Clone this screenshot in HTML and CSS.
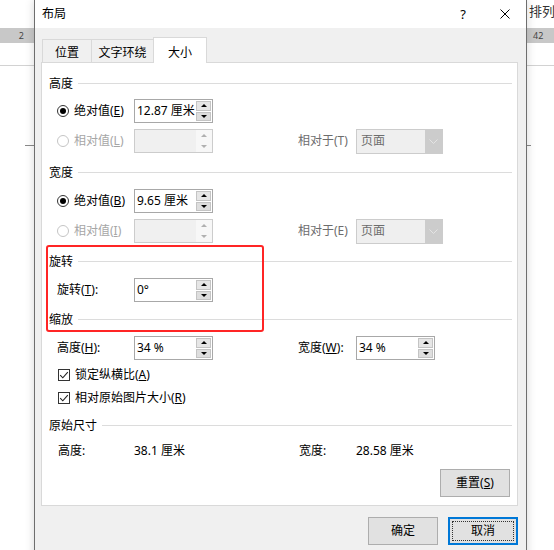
FILE: index.html
```html
<!DOCTYPE html>
<html lang="zh-CN">
<head>
<meta charset="utf-8">
<title>布局</title>
<link rel="stylesheet" href="styles.css">
</head>
<body>
<div class="screen">
  <div class="doc doc-left">
    <div class="doc-top"></div>
    <div class="ruler"><span class="ruler-num">2</span></div>
    <div class="doc-gap"></div>
    <div class="doc-line"></div>
    <div class="tick-row"><span class="tick"></span></div>
  </div>

  <div class="dialog">
    <div class="titlebar">
      <span class="title">布局</span>
      <span class="tb-help">?</span>
      <span class="tb-close"><svg width="10" height="10" viewBox="0 0 10 10"><path d="M0.5 0.5 L9.5 9.5 M9.5 0.5 L0.5 9.5" stroke="#000" stroke-width="1" fill="none"/></svg></span>
    </div>
    <div class="dbody">
      <div class="tabs">
        <div class="tab t1">位置</div>
        <div class="tab t2">文字环绕</div>
        <div class="tab active">大小</div>
      </div>
      <div class="panel">
        <div class="sec">高度</div>
        <div class="row mt7">
          <div class="c1">
            <svg class="radio" width="12" height="12" viewBox="0 0 12 12"><circle cx="6" cy="6" r="5.5" fill="#fff" stroke="#333"/><circle cx="6" cy="6" r="3" fill="#000"/></svg>
            <span class="lbl">绝对值(<u>E</u>)</span>
          </div>
          <div class="spin">
            <span class="spin-val">12.87 厘米</span>
            <span class="spin-btns"><span class="sb"><i class="up"></i></span><span class="sb"><i class="dn"></i></span></span>
          </div>
        </div>
        <div class="row mt6">
          <div class="c1">
            <svg class="radio" width="12" height="12" viewBox="0 0 12 12"><circle cx="6" cy="6" r="5.5" fill="#fff" stroke="#c4c4c4"/></svg>
            <span class="lbl dis">相对值(<u>L</u>)</span>
          </div>
          <div class="spin off">
            <span class="spin-val"></span>
            <span class="spin-btns"><span class="sb"><i class="up"></i></span><span class="sb"><i class="dn"></i></span></span>
          </div>
          <div class="c3 dis2">相对于(T)</div>
          <div class="combo">
            <span class="combo-val">页面</span>
            <span class="combo-arrow"><svg width="9" height="5" viewBox="0 0 9 5"><path d="M0.5 0.5 L4.5 4.5 L8.5 0.5" stroke="#e4e4e4" fill="none"/></svg></span>
          </div>
        </div>

        <div class="sec mt12">宽度</div>
        <div class="row mt8">
          <div class="c1">
            <svg class="radio" width="12" height="12" viewBox="0 0 12 12"><circle cx="6" cy="6" r="5.5" fill="#fff" stroke="#333"/><circle cx="6" cy="6" r="3" fill="#000"/></svg>
            <span class="lbl">绝对值(<u>B</u>)</span>
          </div>
          <div class="spin">
            <span class="spin-val">9.65 厘米</span>
            <span class="spin-btns"><span class="sb"><i class="up"></i></span><span class="sb"><i class="dn"></i></span></span>
          </div>
        </div>
        <div class="row mt6">
          <div class="c1">
            <svg class="radio" width="12" height="12" viewBox="0 0 12 12"><circle cx="6" cy="6" r="5.5" fill="#fff" stroke="#c4c4c4"/></svg>
            <span class="lbl dis">相对值(<u>I</u>)</span>
          </div>
          <div class="spin off">
            <span class="spin-val"></span>
            <span class="spin-btns"><span class="sb"><i class="up"></i></span><span class="sb"><i class="dn"></i></span></span>
          </div>
          <div class="c3 dis2">相对于(E)</div>
          <div class="combo">
            <span class="combo-val">页面</span>
            <span class="combo-arrow"><svg width="9" height="5" viewBox="0 0 9 5"><path d="M0.5 0.5 L4.5 4.5 L8.5 0.5" stroke="#e4e4e4" fill="none"/></svg></span>
          </div>
        </div>

        <div class="sec mt11">旋转</div>
        <div class="row mt8">
          <div class="c1"><span class="lbl">旋转(<u>T</u>):</span></div>
          <div class="spin">
            <span class="spin-val">0°</span>
            <span class="spin-btns"><span class="sb"><i class="up"></i></span><span class="sb"><i class="dn"></i></span></span>
          </div>
        </div>

        <div class="sec mt10">缩放</div>
        <div class="row mt8">
          <div class="c1"><span class="lbl">高度(<u>H</u>):</span></div>
          <div class="spin">
            <span class="spin-val">34 %</span>
            <span class="spin-btns"><span class="sb"><i class="up"></i></span><span class="sb"><i class="dn"></i></span></span>
          </div>
          <div class="c3">宽度(<u>W</u>):</div>
          <div class="spin">
            <span class="spin-val">34 %</span>
            <span class="spin-btns"><span class="sb"><i class="up"></i></span><span class="sb"><i class="dn"></i></span></span>
          </div>
        </div>
        <div class="chk mt7">
          <svg class="cbox" width="12" height="12" viewBox="0 0 12 12"><rect x="0.5" y="0.5" width="11" height="11" fill="#fff" stroke="#333"/><path d="M2.2 6.2 L4.8 8.8 L9.8 3.2" stroke="#222" stroke-width="1.1" fill="none"/></svg>
          <span class="lbl">锁定纵横比(<u>A</u>)</span>
        </div>
        <div class="chk mt7">
          <svg class="cbox" width="12" height="12" viewBox="0 0 12 12"><rect x="0.5" y="0.5" width="11" height="11" fill="#fff" stroke="#333"/><path d="M2.2 6.2 L4.8 8.8 L9.8 3.2" stroke="#222" stroke-width="1.1" fill="none"/></svg>
          <span class="lbl">相对原始图片大小(<u>R</u>)</span>
        </div>

        <div class="sec mt12">原始尺寸</div>
        <div class="row info mt9">
          <div class="c1 i1">高度:</div>
          <div class="c2">38.1 厘米</div>
          <div class="c3 i3">宽度:</div>
          <div class="c4">28.58 厘米</div>
        </div>

        <div class="reset-row">
          <button class="btn">重置(<u>S</u>)</button>
        </div>

        <div class="highlight"></div>
      </div>

      <div class="actions">
        <button class="btn">确定</button>
        <button class="btn primary">取消</button>
      </div>
    </div>
  </div>

  <div class="doc doc-right">
    <div class="doc-top"><span class="menu-txt">排列</span></div>
    <div class="ruler"><span class="ruler-num">42</span></div>
    <div class="doc-gap"></div>
    <div class="doc-line"></div>
    <div class="tick-row"><span class="tick"></span></div>
  </div>
</div>
</body>
</html>
```

FILE: styles.css
```css
* { box-sizing: border-box; }
html, body { margin: 0; padding: 0; }
body {
  width: 554px;
  height: 550px;
  overflow: hidden;
  background: #fff;
  font-family: "Noto Sans", "Noto Sans CJK SC", sans-serif;
  font-size: 12px;
  color: #000;
}
u { text-decoration: underline; text-underline-offset: 1px; }

.screen { display: flex; height: 550px; }

/* background document strips */
.doc { display: flex; flex-direction: column; background: #fff; }
.doc-left { width: 34px; }
.doc-right { width: 27px; }
.doc-top { height: 28px; }
.ruler {
  height: 15px;
  background: #c8c8c8;
  display: flex;
  align-items: center;
  font-size: 9px;
  color: #444;
  line-height: 15px;
}
.doc-left .ruler { justify-content: flex-end; padding-right: 10px; }
.doc-right .ruler { padding-left: 6px; }
.doc-gap { height: 22px; }
.doc-line { height: 1px; background: #d2d2d2; }
.tick-row { margin-top: 79px; height: 1px; display: flex; }
.doc-left .tick-row { justify-content: flex-end; }
.tick { width: 9px; height: 1px; background: #8a8a8a; }
.doc-right .tick { width: 4px; }
.menu-txt {
  display: block;
  padding: 3px 0 0 2px;
  line-height: 16px;
  font-size: 13px;
  color: #333;
  white-space: nowrap;
}

/* dialog */
.dialog {
  position: relative;
  z-index: 2;
  width: 493px;
  height: 560px;
  border-left: 1px solid #6e6e6e;
  border-right: 1px solid #6e6e6e;
  background: #f0f0f0;
  box-shadow: 0 0 9px rgba(0, 0, 0, 0.16);
}
.titlebar {
  height: 28px;
  background: #fff;
  display: flex;
  align-items: center;
  padding-left: 7px;
}
.title { font-size: 12px; line-height: 16px; }
.tb-help {
  margin-left: auto;
  width: 36px;
  text-align: center;
  font-size: 13px;
  line-height: 16px;
}
.tb-close {
  width: 36px;
  margin-left: 6px;
  margin-right: 3px;
  display: flex;
  justify-content: center;
  align-items: center;
  height: 28px;
}

.dbody { padding: 0 8px 0 6px; }

.tabs {
  position: relative;
  z-index: 2;
  display: flex;
  align-items: flex-end;
  height: 25px;
  margin-top: 9px;
  padding-left: 1px;
}
.tab {
  height: 23px;
  border: 1px solid #d9d9d9;
  border-bottom: none;
  border-right: none;
  background: #f0f0f0;
  display: flex;
  align-items: center;
  justify-content: center;
  padding-top: 3px;
  line-height: 16px;
}
.t1 { width: 49px; }
.t2 { width: 62px; }
.tab.active {
  width: 54px;
  height: 26px;
  margin-bottom: -1px;
  border-right: 1px solid #d9d9d9;
  background: #fff;
  padding-top: 4px;
}

.panel {
  position: relative;
  z-index: 1;
  background: #fff;
  border: 1px solid #d9d9d9;
  padding: 13px 5px 8px 7px;
}

.sec {
  height: 16px;
  line-height: 16px;
  display: flex;
  align-items: center;
  white-space: nowrap;
}
.sec::after {
  content: "";
  flex: 1;
  height: 1px;
  background: #dcdcdc;
  margin-left: 5px;
  margin-top: -1px;
}

.mt6 { margin-top: 6px; }
.mt7 { margin-top: 7px; }
.mt8 { margin-top: 8px; }
.mt9 { margin-top: 9px; }
.mt10 { margin-top: 10px; }
.mt11 { margin-top: 11px; }
.mt12 { margin-top: 12px; }

.row {
  height: 24px;
  display: flex;
  align-items: center;
  padding-left: 8px;
  white-space: nowrap;
}
.c1 {
  width: 77px;
  display: flex;
  align-items: center;
  line-height: 16px;
}
.radio { flex: none; margin-right: 5px; }
.lbl { line-height: 16px; }
.dis { color: #a6a6a6; }
.dis2 { color: #6d6d6d; }
.c3 { width: 58px; margin-left: 85px; line-height: 16px; }

.spin {
  width: 79px;
  height: 24px;
  border: 1px solid #a8a8a8;
  background: #fff;
  display: flex;
}
.spin-val {
  flex: 1;
  padding-left: 2px;
  line-height: 21px;
}
.spin-btns {
  width: 16px;
  display: flex;
  flex-direction: column;
  gap: 1px;
  padding: 1px 1px 1px 0;
}
.sb {
  flex: 1;
  border: 1px solid #c4c4c4;
  background: #e6e6e6;
  display: flex;
  align-items: center;
  justify-content: center;
}
.sb + .sb { background: #dedede; }
.up, .dn {
  display: block;
  width: 0;
  height: 0;
  border-left: 3px solid transparent;
  border-right: 3px solid transparent;
}
.up { border-bottom: 3px solid #000; }
.dn { border-top: 3px solid #000; }

.spin.off { border-color: #cccccc; }
.spin.off .spin-val { background: #f0f0f0; }
.spin.off .spin-btns { background: #f7f7f7; }
.spin.off .sb { background: #f7f7f7; border-color: #f7f7f7; }
.spin.off .up { border-bottom-color: #b0b0b0; }
.spin.off .dn { border-top-color: #b0b0b0; }

.combo {
  width: 87px;
  height: 25px;
  border: 1px solid #cccccc;
  background: #efefef;
  display: flex;
}
.combo-val {
  flex: 1;
  padding-left: 4px;
  line-height: 22px;
  color: #6d6d6d;
}
.combo-arrow {
  width: 17px;
  background: #cccccc;
  display: flex;
  align-items: center;
  justify-content: center;
}

.chk {
  height: 16px;
  display: flex;
  align-items: center;
  padding-left: 9px;
  white-space: nowrap;
}
.cbox { flex: none; margin-right: 5px; }

.row.info { height: 16px; line-height: 16px; }
.i1 { padding-left: 1px; }
.c2 { width: 79px; }
.i3 { padding-left: 1px; }

.reset-row {
  display: flex;
  justify-content: flex-end;
  margin-top: 10px;
  padding-right: 2px;
}

.btn {
  width: 70px;
  height: 28px;
  border: 1px solid #adadad;
  background: #e1e1e1;
  font-family: inherit;
  font-size: 12px;
  color: #000;
  padding: 0;
  line-height: 16px;
  margin: 0;
}
.actions {
  display: flex;
  justify-content: flex-end;
  gap: 10px;
  margin-top: 11px;
}
.btn.primary {
  position: relative;
  border: 2px solid #0078d7;
}
.btn.primary::after {
  content: "";
  position: absolute;
  inset: 2px;
  border: 1px dotted #333;
}

.highlight {
  position: absolute;
  left: 4px;
  top: 182px;
  width: 218px;
  height: 87px;
  border: 2px solid #ff2525;
  border-radius: 3px;
  pointer-events: none;
}
```
